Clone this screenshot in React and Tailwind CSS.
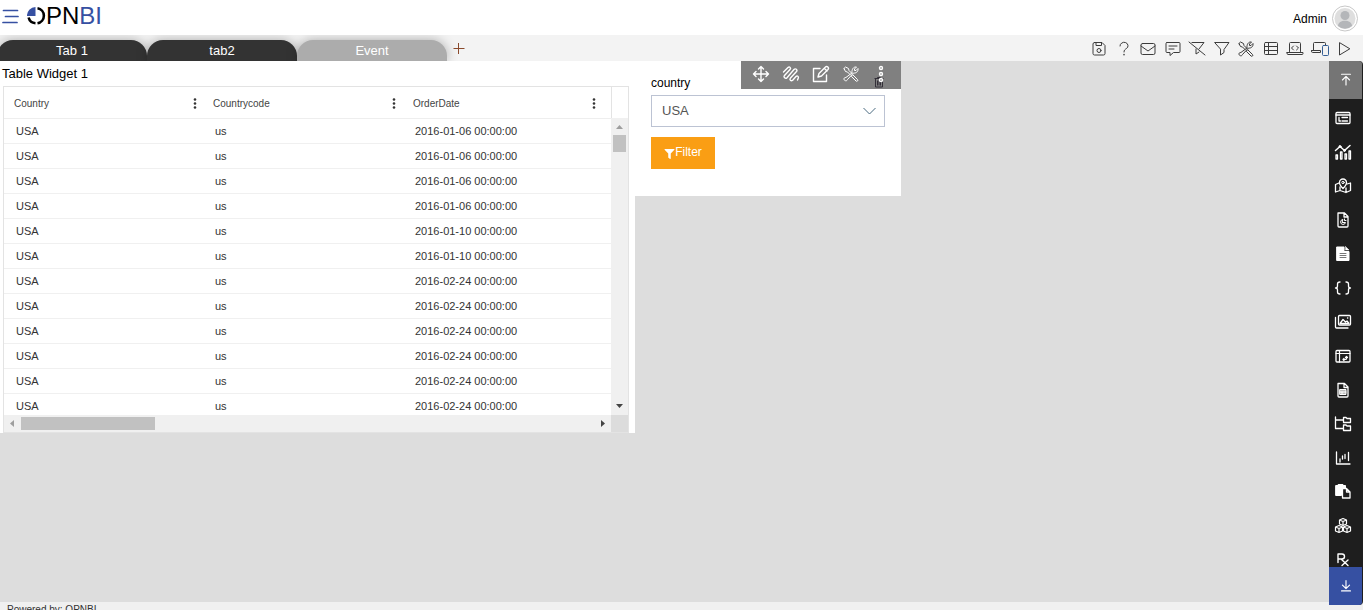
import React, { useState } from "react";
import { FaFilter } from "react-icons/fa";

function Icon({ children, className = "w-[18px] h-[18px]" }) {
  return (
    <svg
      viewBox="0 0 18 18"
      className={className}
      fill="none"
      stroke="currentColor"
      strokeLinecap="round"
      strokeLinejoin="round"
      aria-hidden="true"
    >
      {children}
    </svg>
  );
}

function ToolsIcon() {
  return (
    <Icon>
      {/* screwdriver */}
      <path d="M2 3.500L3.500 2l3 1.500.500 2 3 3M2 3.500l1.500 3 2 .500 2.500 2.500M11 10l4.500 4.500c1 1-.500 2.500-1.500 1.500L9.500 11.500z" />
      {/* wrench */}
      <path d="M10 7.500c-.500-3 1.500-6 4.500-5.500L12.500 4v1.500H14l2-2c.500 3-2 5-4.500 4.500L5.500 14.500c-.500 2-3.500 1.500-3.500-.500 0-1 .500-1.500 1.500-1.500z" />
    </Icon>
  );
}

const toolbarItems = [
  {
    label: "Save",
    icon: (
      <Icon>
        <path d="M4.500 2.500h7.500l3 3v8a1.500 1.500 0 0 1-1.500 1.500h-9A1.500 1.500 0 0 1 3 13.500V4a1.500 1.500 0 0 1 1.500-1.500z" />
        <path d="M6 2.500v3h5.500v-3" />
        <circle cx="9" cy="10.500" r="2" />
      </Icon>
    ),
  },
  {
    label: "Help",
    icon: (
      <Icon>
        <path d="M5 6a4 3.500 0 1 1 6.500 2.500C10 9.500 9 10 9 12" />
        <path d="M9 14.500v.300" strokeWidth="1.500" />
      </Icon>
    ),
  },
  {
    label: "Mail",
    icon: (
      <Icon>
        <rect x="2" y="3.500" width="14" height="11" rx="1.500" />
        <path d="M2 6l7 5 7-5" />
      </Icon>
    ),
  },
  {
    label: "Comments",
    icon: (
      <Icon>
        <path d="M3 2.500h12a1 1 0 0 1 1 1v8a1 1 0 0 1-1 1H9.500L6 15.500v-3H3a1 1 0 0 1-1-1v-8a1 1 0 0 1 1-1z" />
        <path d="M5 6h8M5 9h5" />
      </Icon>
    ),
  },
  {
    label: "Clear filter",
    icon: (
      <Icon>
        <path d="M4 2.500h12l-5 6.500M8 9v5l3-2" />
        <path d="M1 2l16 13" />
      </Icon>
    ),
  },
  {
    label: "Filter",
    icon: (
      <Icon>
        <path d="M2 2.500h14l-5 7v3L7.500 15V9.500z" />
      </Icon>
    ),
  },
  { label: "Tools", icon: <ToolsIcon /> },
  {
    label: "Table",
    icon: (
      <Icon>
        <rect x="2.500" y="2.500" width="13" height="12" rx="1" />
        <path d="M2.500 6.500h13M2.500 10.500h13M6.500 2.500v12" />
      </Icon>
    ),
  },
  {
    label: "Code",
    icon: (
      <Icon>
        <path d="M3.500 11.500v-8a1 1 0 0 1 1-1h9a1 1 0 0 1 1 1v8" />
        <path d="M1 12.500h16v1a1 1 0 0 1-1 1H2a1 1 0 0 1-1-1zM7.500 6L5.500 8l2 2M10.500 6l2 2-2 2" />
      </Icon>
    ),
  },
  {
    label: "Devices",
    icon: (
      <Icon>
        <path d="M2.500 10.500v-7a1 1 0 0 1 1-1h10a1 1 0 0 1 1 1V5M0.500 10.500h9v2h-8a1 1 0 0 1-1-1z" />
        <rect x="11.500" y="5.500" width="6" height="10" rx="1" className="fill-[#f3f3f3] stroke-[#355f96]" />
      </Icon>
    ),
  },
  {
    label: "Preview",
    icon: (
      <Icon>
        <path d="M4.500 3v12L14.500 9z" />
      </Icon>
    ),
  },
];

const widgetItems = [
  {
    label: "Form",
    icon: (
      <Icon>
        <rect x="2" y="3.500" width="14" height="11" rx="1" strokeWidth="1.300" />
        <path d="M2 6h14M5 8.500v3.500h1.500M8 8.500h5.500M8 12h5.500" strokeWidth="1.300" />
      </Icon>
    ),
  },
  {
    label: "Chart",
    icon: (
      <Icon>
        <path d="M1.500 7.500l4.500-4 4.500 4L16 2.500" strokeWidth="1.500" />
        <path d="M2 16v-4h1.500v4zM6.500 16V9H8v7zM11 16v-5h1.500v5zM15 16V8h1.500v8z" strokeWidth="1.300" />
        <circle cx="6" cy="3.500" r="1" fill="currentColor" />
        <circle cx="10.500" cy="7.500" r="1" fill="currentColor" />
      </Icon>
    ),
  },
  {
    label: "Map",
    icon: (
      <Icon>
        <path d="M5 6L1.500 7.500V15L6 13.500l6 2 4.500-2V6L13 7M6 10v3.500M12 11v4.500" strokeWidth="1.300" />
        <path d="M9 11.500C7 9.500 5.500 7.500 5.500 5.500a3.500 3.500 0 0 1 7 0c0 2-1.500 4-3.500 6z" strokeWidth="1.300" />
        <circle cx="9" cy="5.500" r="1.200" />
      </Icon>
    ),
  },
  {
    label: "Report",
    icon: (
      <Icon>
        <path d="M4 2h6.500L14 5.500V15a1 1 0 0 1-1 1H5a1 1 0 0 1-1-1zM10 2v4h4" strokeWidth="1.300" />
        <path d="M8.500 8.500A2.500 2.500 0 1 0 11.500 11.500H8.500zM10.500 8v1.500h1.500" />
      </Icon>
    ),
  },
  {
    label: "Document",
    icon: (
      <Icon>
        <path d="M3 2h7v4.500h5V15.500H3z" fill="currentColor" />
        <path d="M11.500 1.500L15 5h-3.500z" fill="currentColor" strokeWidth="0.500" />
        <path d="M6 8.500h6M6 10.500h6M6 12.500h6" className="stroke-[#777]" />
      </Icon>
    ),
  },
  {
    label: "Script",
    icon: (
      <Icon>
        <path
          d="M6 3C4 3 3.500 3.500 3.500 5v2c0 1-.500 2-2 2 1.500 0 2 1 2 2v2c0 1.500.500 2 2.500 2M12 3c2 0 2.500.500 2.500 2v2c0 1 .500 2 2 2-1.500 0-2 1-2 2v2c0 1.500-.500 2-2.500 2"
          strokeWidth="1.300"
        />
      </Icon>
    ),
  },
  {
    label: "Images",
    icon: (
      <Icon>
        <rect x="4.500" y="2.500" width="12" height="9.500" rx="1" strokeWidth="1.300" />
        <path d="M1.500 4.500V14a1 1 0 0 0 1 1H14M6 10.500l3-4 2.500 2.500 1.500-1 2 2.500z" strokeWidth="1.300" />
        <path d="M13.500 5h.300" strokeWidth="1.300" />
      </Icon>
    ),
  },
  {
    label: "Pivot table",
    icon: (
      <Icon>
        <rect x="2" y="3.500" width="14" height="11.500" rx="1" strokeWidth="1.300" />
        <path d="M2 6.500h14M5.500 3.500V15M9 12.500h2.500a1 1 0 0 0 1-1V9.500M10 11.500l-1 1 1 1M11.500 10.500l1-1 1 1" strokeWidth="1.200" />
      </Icon>
    ),
  },
  {
    label: "Data file",
    icon: (
      <Icon>
        <path d="M4 2.500h6.500L14 6v9a1 1 0 0 1-1 1H5a1 1 0 0 1-1-1zM10 2.500v4h4" strokeWidth="1.300" />
        <path d="M6 8.500h6v5H6zM6 11h6M8 11v2.500" className="fill-[#bbb]" />
      </Icon>
    ),
  },
  {
    label: "Folders",
    icon: (
      <Icon>
        <path d="M1.500 2v11.500H9M1.500 5H9" strokeWidth="1.300" />
        <path d="M9.500 2.500H12l1 1h3.500v4h-7zM9.500 10H12l1 1h3.500v4.500h-7z" strokeWidth="1.300" />
      </Icon>
    ),
  },
  {
    label: "Statistics",
    icon: (
      <Icon>
        <path d="M2.500 3v12H16M6 10v3M8.500 7v3M11 5.500v4M14.500 3.500v8" strokeWidth="1.300" />
      </Icon>
    ),
  },
  {
    label: "Paste",
    icon: (
      <Icon>
        <path d="M2 2.500h9.500V5H7.500v7.500H2z" fill="currentColor" />
        <path d="M4.500 1.500h4.500v1H4.500z" fill="currentColor" />
        <path d="M8.500 5.500h4L16 9v6H8.500zM12.500 5.500V9H16" strokeWidth="1.300" />
      </Icon>
    ),
  },
  {
    label: "Cubes",
    icon: (
      <Icon>
        <path
          d="M9 1.500l3.500 1.500v4L9 8.500 5.500 7V3zM9 4.500v4M5.500 3L9 4.500 12.500 3M5 8.500L8.500 10v4L5 15.500 1.500 14v-4zM5 11.500v4M1.500 10L5 11.500 8.500 10M13 8.500l3.500 1.500v4L13 15.500 9.500 14v-4zM13 11.500v4M9.500 10l3.500 1.500 3.500-1.500"
          strokeWidth="1.200"
        />
      </Icon>
    ),
  },
  {
    label: "Formula",
    icon: (
      <Icon>
        <path d="M4 11.500V3h4a2.500 2.500 0 0 1 0 5H4M7 8l7 6.500M14 9l-6 5.500" strokeWidth="1.400" />
      </Icon>
    ),
  },
];

const columns = ["Country", "Countrycode", "OrderDate"];

const dates = [
  "2016-01-06 00:00:00",
  "2016-01-06 00:00:00",
  "2016-01-06 00:00:00",
  "2016-01-06 00:00:00",
  "2016-01-10 00:00:00",
  "2016-01-10 00:00:00",
  "2016-02-24 00:00:00",
  "2016-02-24 00:00:00",
  "2016-02-24 00:00:00",
  "2016-02-24 00:00:00",
  "2016-02-24 00:00:00",
  "2016-02-24 00:00:00",
];

function Header() {
  return (
    <header className="flex h-[35px] shrink-0 items-center justify-between bg-white">
      <div className="flex items-center gap-2 pb-1 pl-[2px]">
        <button aria-label="Toggle menu" className="pt-[2px] text-[#3650a2]">
          <svg width="17" height="16" viewBox="0 0 17 16" stroke="currentColor" strokeWidth="1.700" strokeLinecap="round">
            <path d="M1.500 1.500h14M3.500 7.500h12.500M1 13.500h14" />
          </svg>
        </button>
        <a href="#" className="flex items-center text-[24px] leading-[30px] text-black">
          <svg width="19" height="20" viewBox="0 0 19 20" fill="none" aria-hidden="true">
            <path d="M10.500 2.200A7.600 7.600 0 0 1 10.500 17.200M8.500 17.200A7.600 7.600 0 0 1 1.600 11.500" stroke="#000" strokeWidth="2.600" />
            <path d="M8.500 1v9H0A8.600 8.600 0 0 1 8.500 1z" fill="#3650a2" />
          </svg>
          <span>
            PN<span className="text-[#3650a2]">BI</span>
          </span>
        </a>
      </div>
      <div className="flex items-center gap-1 pr-1 pt-[2px] text-[12px]">
        <span>Admin</span>
        <svg width="28" height="28" viewBox="0 0 28 28" role="img" aria-label="Admin avatar">
          <circle cx="14" cy="13.500" r="12.500" fill="#fff" stroke="#c8c8c8" />
          <circle cx="14" cy="13.500" r="10.500" fill="#dedede" />
          <circle cx="14" cy="10.500" r="4.500" fill="#b4b6b9" />
          <path d="M7 21c0-7 14-7 14 0a10.500 10.500 0 0 1-14 0z" fill="#b4b6b9" />
        </svg>
      </div>
    </header>
  );
}

function TabBar() {
  return (
    <nav className="flex h-[26px] shrink-0 items-end justify-between overflow-hidden bg-[#f3f3f3]">
      <div className="-ml-[3px] flex items-end text-[13px] leading-[21px] text-white">
        <button className="h-[21px] w-[150px] rounded-t-[16px] bg-[#333] shadow-[0_0_12px_rgba(0,0,0,0.3)]">Tab 1</button>
        <button className="h-[21px] w-[150px] rounded-t-[16px] bg-[#333] shadow-[0_0_12px_rgba(0,0,0,0.3)]">tab2</button>
        <button className="h-[21px] w-[150px] rounded-t-[16px] bg-[#acacac] shadow-[0_0_12px_rgba(0,0,0,0.3)]">Event</button>
        <button aria-label="Add tab" className="flex h-[24px] w-6 items-center justify-center text-[#8a4a2c]">
          <svg width="12" height="12" viewBox="0 0 12 12" stroke="currentColor">
            <path d="M0.500 5.500h11M5.500 0v11" />
          </svg>
        </button>
      </div>
      <div className="flex h-full w-[273px] items-center justify-between pr-[10px] pt-[2px] text-[#3c3c3c]">
        {toolbarItems.map((item) => (
          <button key={item.label} aria-label={item.label} className="flex w-[18px] justify-center">
            {item.icon}
          </button>
        ))}
      </div>
    </nav>
  );
}

function TableWidget() {
  return (
    <section className="h-[372px] w-[635px] bg-white">
      <h2 className="h-[25px] pl-[2px] text-[13px] leading-[25px]">Table Widget 1</h2>
      <div className="ml-[3px] mr-[6px] flex h-[347px] flex-col border border-[#e3e3e3]">
        <div className="flex min-h-0 flex-1">
          <div className="min-w-0 flex-1 overflow-hidden">
            <table className="w-full table-fixed border-collapse text-left text-[11px] text-[#333]">
              <colgroup>
                <col className="w-[199px]" />
                <col className="w-[200px]" />
                <col />
              </colgroup>
              <thead>
                <tr className="h-[31px] border-b border-[#eee] text-[10px] text-[#444]">
                  {columns.map((name) => (
                    <th key={name} className="pb-0 pl-[10px] pr-0 pt-[2px] font-normal">
                      <div className="flex w-[183px] items-center justify-between">
                        {name}
                        <button aria-label={`${name} column menu`}>
                          <svg width="4" height="12" viewBox="0 0 4 12" fill="#333">
                            <circle cx="2" cy="2.500" r="1.300" />
                            <circle cx="2" cy="6.500" r="1.300" />
                            <circle cx="2" cy="10.500" r="1.300" />
                          </svg>
                        </button>
                      </div>
                    </th>
                  ))}
                </tr>
              </thead>
              <tbody>
                {dates.map((date, i) => (
                  <tr key={i} className="h-[25px] border-b border-[#f0f0f0]">
                    <td className="pb-0 pl-3 pt-[2px]">USA</td>
                    <td className="pb-0 pl-3 pt-[2px]">us</td>
                    <td className="pb-0 pl-3 pt-[2px]">{date}</td>
                  </tr>
                ))}
              </tbody>
            </table>
          </div>
          <div className="flex w-[17px] flex-col">
            <div className="h-[31px] border-l border-[#e3e3e3]" />
            {/* Vertical scrollbar */}
            <div className="flex flex-1 flex-col items-center bg-[#f0f0f0]">
              <svg width="17" height="17" viewBox="0 0 17 17" fill="#9e9e9e">
                <path d="M5 11l3.500-4L12 11z" />
              </svg>
              <div className="h-[17px] w-[13px] bg-[#c1c1c1]" />
              <svg width="17" height="17" viewBox="0 0 17 17" fill="#444" className="mt-auto">
                <path d="M5 6l3.500 4L12 6z" />
              </svg>
            </div>
          </div>
        </div>
        {/* Horizontal scrollbar */}
        <div className="flex h-[17px] items-center bg-[#f0f0f0]">
          <svg width="17" height="17" viewBox="0 0 17 17" fill="#9e9e9e">
            <path d="M10 5L6 8.500l4 3.500z" />
          </svg>
          <div className="h-[13px] w-[134px] bg-[#c1c1c1]" />
          <svg width="17" height="17" viewBox="0 0 17 17" fill="#444" className="ml-auto">
            <path d="M7 5l4 3.500L7 12z" />
          </svg>
          <div className="h-[17px] w-[17px] bg-[#dcdcdc]" />
        </div>
      </div>
    </section>
  );
}

function FilterWidget() {
  const [country, setCountry] = useState("USA");

  return (
    <section className="relative h-[135px] w-[266px] bg-white px-4 pt-[14px]">
      <label htmlFor="country" className="block h-5 text-[12px] leading-4">
        country
      </label>
      <div className="relative">
        <select
          id="country"
          value={country}
          onChange={(e) => setCountry(e.target.value)}
          className="block h-8 w-full appearance-none border border-[#bcc3d3] bg-white px-[10px] text-[13px] text-[#555]"
        >
          <option>USA</option>
        </select>
        <svg
          className="pointer-events-none absolute right-[9px] top-3"
          width="13"
          height="8"
          viewBox="0 0 13 8"
          fill="none"
          stroke="#4a6a80"
        >
          <path d="M0.500 1l6 6 6-6" />
        </svg>
      </div>
      <button className="mt-[10px] flex h-8 w-16 items-center justify-center bg-[#fa9e14] pb-[2px] text-[12px] text-white">
        <FaFilter className="mt-1 h-[10px] w-[11px]" />
        Filter
      </button>

      {/* Widget actions */}
      <div className="absolute right-0 top-0 flex h-7 bg-[#808080] px-[5px] pb-[2px] text-white">
        <button aria-label="Move" className="flex w-[30px] items-center justify-center">
          <Icon>
            <path d="M9 1.500v15M1.500 9h15M6.500 4L9 1.500 11.500 4M6.500 14L9 16.500l2.500-2.500M4 6.500L1.500 9 4 11.500M14 6.500L16.500 9 14 11.500" strokeWidth="1.400" />
          </Icon>
        </button>
        <button aria-label="Draw" className="flex w-[30px] items-center justify-center">
          <Icon>
            <path
              d="M1.500 7L6 2.500c1.500-1.500 3.500.500 2 2L2.500 10.500c-1.500 1.700 1 3.700 2.500 2.200L12 4.500c1.500-1.500 4 .300 2.500 2L8.500 13c-1.500 1.700.500 3.700 2.200 2.200L14 11.500c1.200-1.200 3 0 2.300 1.500L15.500 15"
              strokeWidth="1.400"
            />
          </Icon>
        </button>
        <button aria-label="Edit" className="flex w-[30px] items-center justify-center">
          <Icon>
            <path d="M8 3.500H1.500v13h13V10" strokeWidth="1.400" />
            <path d="M6 12l1-3.500L13.500 2c1.500-1.500 4 .800 2.500 2.500L9.500 11zM12.500 3.500L15 6" strokeWidth="1.400" />
          </Icon>
        </button>
        <button aria-label="Settings" className="flex w-[30px] items-center justify-center">
          <ToolsIcon />
        </button>
        <button aria-label="More" className="relative flex w-[30px] items-center justify-center">
          <svg className="absolute -bottom-px left-2 text-[#332f38]" width="10" height="12" viewBox="0 0 10 12" fill="none" stroke="currentColor">
            <path d="M0.500 2.500h9M3.500 2.500v-1h3v1M1.500 2.500v8.500h7V2.500M3.500 4.500v5M5 4.500v5M6.500 4.500v5" />
          </svg>
          <Icon className="relative h-[18px] w-[18px]">
            <circle cx="9" cy="3" r="1.500" strokeWidth="1.400" />
            <circle cx="9" cy="9" r="1.500" strokeWidth="1.400" />
            <circle cx="9" cy="15" r="1.500" strokeWidth="1.400" />
          </Icon>
        </button>
      </div>
    </section>
  );
}

function Sidebar() {
  return (
    <aside className="mb-[5px] flex w-[34px] shrink-0 flex-col rounded-r-[4px] bg-[#1e1e1e] pr-px text-white">
      <button aria-label="Scroll up" className="flex h-[38px] w-full shrink-0 items-center justify-center rounded-tr-[3px] bg-[#757575]">
        <Icon className="h-4 w-4">
          <path d="M4 2.500h10M9 14.500V5.500M5 9l4-4 4 4" strokeWidth="1.300" />
        </Icon>
      </button>
      <div className="flex min-h-0 flex-1 flex-col overflow-hidden pr-[5px] pt-[2px]">
        {widgetItems.map((item) => (
          <button key={item.label} aria-label={item.label} className="flex h-[34px] w-full shrink-0 items-center justify-center">
            {item.icon}
          </button>
        ))}
      </div>
      <button aria-label="Scroll down" className="flex h-[38px] w-full shrink-0 items-center justify-center rounded-br-[3px] bg-[#3650a2]">
        <Icon className="h-4 w-4">
          <path d="M4 14.500h10M9 3v8.500M5 8l4 4 4-4" strokeWidth="1.300" />
        </Icon>
      </button>
    </aside>
  );
}

function App() {
  return (
    <div className="flex h-screen flex-col overflow-hidden bg-[#f0f0f0] font-['Liberation_Sans',Arial,sans-serif] text-black">
      <Header />
      <TabBar />
      <div className="flex min-h-0 flex-1">
        <div className="flex min-w-0 flex-1 flex-col">
          <main className="flex min-h-0 flex-1 items-start overflow-hidden bg-[#ddd]">
            <TableWidget />
            <FilterWidget />
          </main>
          <footer className="h-2 shrink-0 overflow-hidden pl-[7px] pt-[2px] text-[10px] leading-3 text-[#333]">
            Powered by: OPNBI
          </footer>
        </div>
        <Sidebar />
      </div>
    </div>
  );
}

export default App;
